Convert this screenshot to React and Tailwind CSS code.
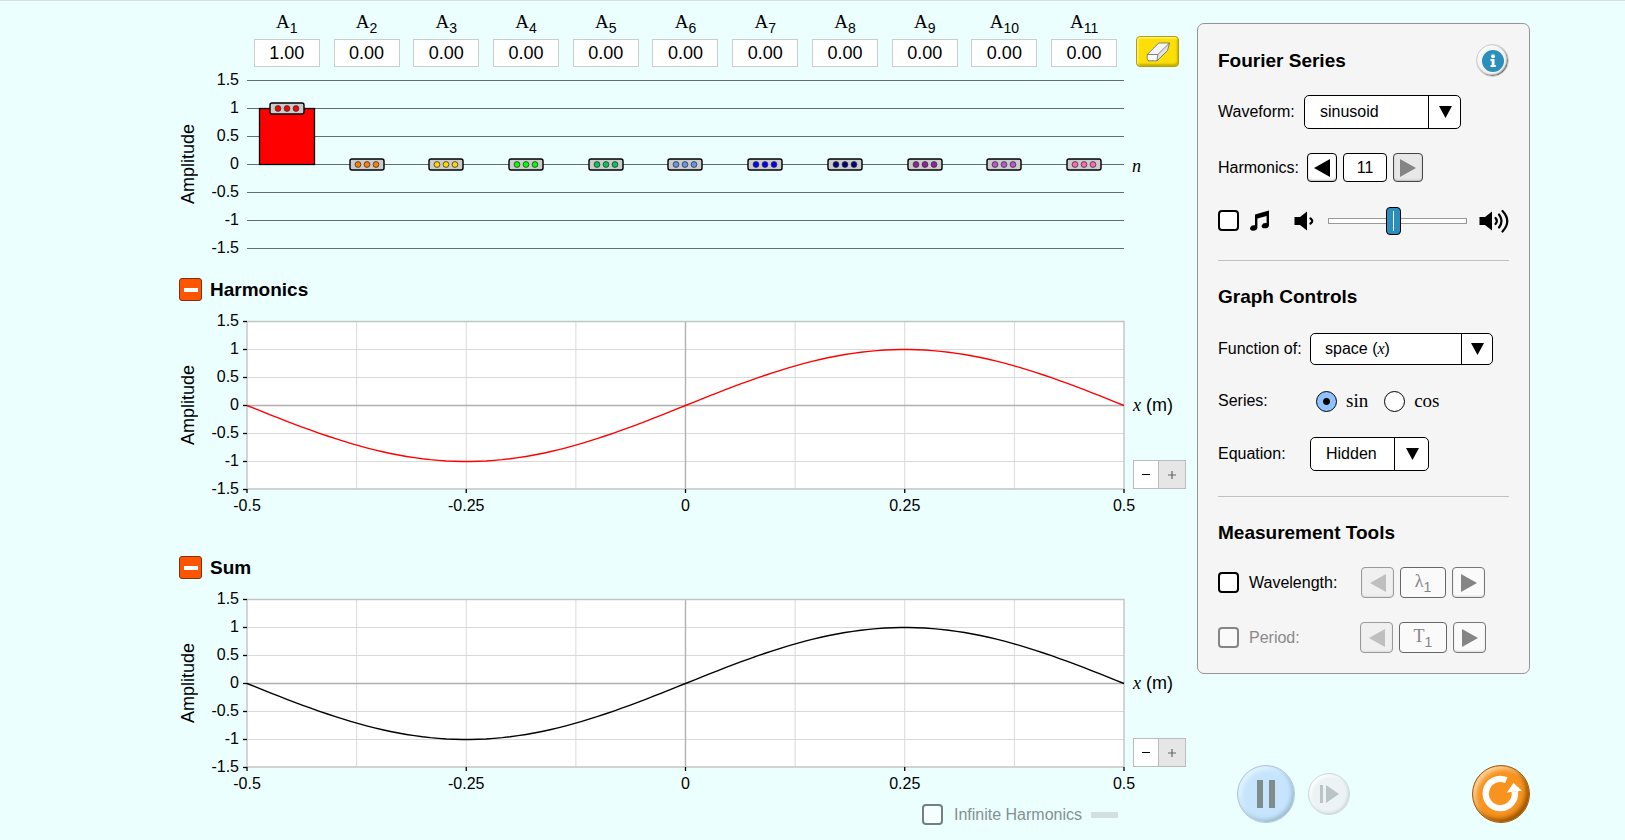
import { useState } from 'react'

const harmonics = [
  { n: 1, value: 1, color: '#ff0000' },
  { n: 2, value: 0, color: '#ff8000' },
  { n: 3, value: 0, color: '#ffd700' },
  { n: 4, value: 0, color: '#00ff00' },
  { n: 5, value: 0, color: '#00c957' },
  { n: 6, value: 0, color: '#6495ed' },
  { n: 7, value: 0, color: '#0000ff' },
  { n: 8, value: 0, color: '#000080' },
  { n: 9, value: 0, color: '#91219e' },
  { n: 10, value: 0, color: '#ba55d3' },
  { n: 11, value: 0, color: '#ff69b4' },
]

const yTicks = ['1.5', '1', '0.5', '0', '-0.5', '-1', '-1.5']
const xTicks = ['-0.5', '-0.25', '0', '0.25', '0.5']

// chart drawing units, one amplitude unit is 56 high
const W = 880
const H = 168
const UNIT = 56

const sinePoints = Array.from({ length: 111 }, (_, i) => {
  const x = i / 110 - 0.5
  return `${i * 8},${(H / 2 + 0.5 - UNIT * Math.sin(2 * Math.PI * x)).toFixed(2)}`
}).join(' ')

function YAxis() {
  return (
    <div className="flex h-[168px] items-center justify-between pr-2">
      <span className="rotate-180 text-lg leading-[18px] [writing-mode:vertical-rl]">Amplitude</span>
      <div className="flex h-full flex-col justify-between text-right text-base leading-5">
        {yTicks.map((tick) => (
          <span key={tick} className="-my-[10px]">{tick}</span>
        ))}
      </div>
    </div>
  )
}

function Handle({ value, color }) {
  const y = H / 2 + 0.5 - UNIT * value
  return (
    <svg className="mx-auto h-[168px] w-[56px] overflow-visible" viewBox="0 0 56 168">
      {value !== 0 && (
        <rect x="0.5" y={y} width="55" height={UNIT * value} fill={color} stroke="#000" strokeWidth="1.3" />
      )}
      <rect x="11" y={y - 5.5} width="34" height="11" rx="2" fill="#ccc" stroke="#000" strokeWidth="1.4" />
      {[19, 28, 37].map((x) => (
        <circle key={x} cx={x} cy={y} r="2.9" fill={color} stroke="#333" strokeWidth="0.8" />
      ))}
    </svg>
  )
}

function AmplitudeChart() {
  return (
    <section>
      <div className="grid grid-cols-[68px_1fr_64px] pt-2">
        <div className="col-start-2 grid grid-cols-11">
          {harmonics.map((h) => (
            <label key={h.n} className="flex flex-col items-center">
              <span className="h-[30px] font-['Liberation_Serif',serif] text-[19px] leading-[26px]">
                A<sub className="bottom-[-5px] font-['Liberation_Sans',sans-serif] text-sm leading-none">{h.n}</sub>
              </span>
              <input
                className="h-7 w-[66px] border border-[#ccc] bg-white text-center text-lg leading-6 outline-none"
                defaultValue={h.value.toFixed(2)}
              />
            </label>
          ))}
        </div>
        <div className="flex items-end pl-3">
          <button
            aria-label="Set all amplitudes to zero"
            className="flex h-[31px] w-[43px] items-center justify-center rounded-[4px] border border-[#b3a000] bg-[#fddf08] shadow-[inset_1px_1px_2px_#fff8b0,inset_-1px_-2px_2px_#c4ad00]"
          >
            <svg className="h-5 w-6" viewBox="0 0 24 20">
              <path d="M1 12.5 12.8 1 23.5 1 21.5 8.6 11 19 2 18.6Z" fill="#e4e4e4" />
              <path d="M1.3 12.5 12.8 1 23.5 1 11.8 12.5Z" fill="#f6f6f6" />
              <path d="M1.3 12.5H11.8L11 18.8 2.4 18.6Q0.8 17 1.3 12.5Z" fill="#fff" />
              <path d="M2 18.6Q0.6 17 1.3 12.5L12.8 1H23.5L21.5 8.6 11 18.8H2M1.3 12.5H11.8L23.5 1M11.8 12.5 11 18.8" fill="none" stroke="#555" strokeWidth="0.7" />
            </svg>
          </button>
        </div>
      </div>
      <div className="mt-[13px] grid grid-cols-[68px_1fr_64px]">
        <YAxis />
        <div className="relative">
          <svg className="block h-[168px] w-full overflow-visible" viewBox={`0 0 ${W} ${H}`} preserveAspectRatio="none">
            {yTicks.map((tick, i) => (
              <line key={tick} x1="0" x2={W} y1={i * 28 + 0.5} y2={i * 28 + 0.5} stroke="#646e6e" strokeWidth="1.2" vectorEffect="non-scaling-stroke" />
            ))}
          </svg>
          <div className="absolute inset-0 grid grid-cols-11">
            {harmonics.map((h) => (
              <Handle key={h.n} value={h.value} color={h.color} />
            ))}
          </div>
        </div>
        <span className="self-center pt-1 pl-2 font-['Liberation_Serif',serif] text-lg leading-5 italic">n</span>
      </div>
    </section>
  )
}

function WaveChart({ title, color }) {
  return (
    <section>
      <div className="flex items-center gap-2">
        <button
          aria-label={`Collapse ${title}`}
          className="flex size-[23px] items-center justify-center rounded-[3px] border border-[#803010] bg-[#ff5500]"
        >
          <span className="h-1 w-[14px] bg-white" />
        </button>
        <h2 className="text-[19px] leading-[23px] font-bold">{title}</h2>
      </div>
      <div className="mt-5 grid grid-cols-[68px_1fr_64px]">
        <YAxis />
        <svg className="block h-[168px] w-full overflow-visible" viewBox={`0 0 ${W} ${H}`} preserveAspectRatio="none">
          <rect width={W} height={H} fill="#fff" />
          <g fill="none" stroke="#d9d9d9">
            {[1, 2, 4, 5].map((i) => (
              <line key={i} x1="0" x2={W} y1={i * 28 + 0.5} y2={i * 28 + 0.5} vectorEffect="non-scaling-stroke" />
            ))}
            {[1, 2, 3, 5, 6, 7].map((i) => (
              <line key={i} x1={i * 110} x2={i * 110} y1="0" y2={H} vectorEffect="non-scaling-stroke" />
            ))}
          </g>
          <g fill="none" stroke="#b0b0b0" strokeWidth="1.4">
            <line x1="0" x2={W} y1="84.5" y2="84.5" vectorEffect="non-scaling-stroke" />
            <line x1="440" x2="440" y1="0" y2={H} vectorEffect="non-scaling-stroke" />
            <rect y="0.5" width={W} height={H - 0.5} stroke="#c4c4c4" vectorEffect="non-scaling-stroke" />
          </g>
          <g stroke="#000" strokeWidth="1.3">
            {yTicks.map((tick, i) => (
              <line key={tick} x1="-4" x2="0" y1={i * 28 + 0.5} y2={i * 28 + 0.5} vectorEffect="non-scaling-stroke" />
            ))}
            {xTicks.map((tick, i) => (
              <line key={tick} x1={i * 220} x2={i * 220} y1={H} y2={H + 4} vectorEffect="non-scaling-stroke" />
            ))}
          </g>
          <polyline points={sinePoints} fill="none" stroke={color} strokeWidth="1.4" vectorEffect="non-scaling-stroke" />
        </svg>
        <div className="grid grid-rows-[1fr_20px_1fr] pl-[9px] text-lg leading-5">
          <span className="row-start-2 whitespace-nowrap">
            <i className="font-['Liberation_Serif',serif]">x</i> (m)
          </span>
          <div className="row-start-3 flex self-end text-base leading-none">
            <button aria-label="Zoom out" className="flex h-[29px] w-[26px] items-center justify-center border border-[#bbb] bg-white">
              <span className="h-px w-2 bg-black" />
            </button>
            <button aria-label="Zoom in" disabled className="flex h-[29px] w-[27px] items-center justify-center border border-l-0 border-[#bbb] bg-[#e6e6e6]">
              <svg className="size-2" viewBox="0 0 8 8">
                <path d="M0 4H8M4 0V8" stroke="#666" strokeWidth="1.2" />
              </svg>
            </button>
          </div>
        </div>
      </div>
      <div className="mr-16 ml-[68px] flex h-[27px] items-end justify-between text-base leading-5">
        {xTicks.map((tick) => (
          <span key={tick} className="flex w-0 justify-center whitespace-nowrap">{tick}</span>
        ))}
      </div>
    </section>
  )
}

function ComboBox({ id, className, capClassName, options, children }) {
  return (
    <div className={`relative ${className}`}>
      <select
        id={id}
        className={`size-full appearance-none rounded-[5px] border border-black bg-white pl-[15px] text-base outline-none ${children ? 'text-transparent' : ''}`}
      >
        {options.map((option) => (
          <option key={option}>{option}</option>
        ))}
      </select>
      {children && (
        <span className="pointer-events-none absolute inset-y-0 left-[15px] flex items-center text-base whitespace-pre">{children}</span>
      )}
      <span className={`pointer-events-none absolute inset-y-0 right-0 flex items-center justify-center border-l border-black ${capClassName}`}>
        <svg className="h-3 w-[13px]" viewBox="0 0 13 12">
          <path d="M0 0H13L6.5 12Z" />
        </svg>
      </span>
    </div>
  )
}

function ArrowButton({ direction, className, arrow, label, disabled }) {
  return (
    <button
      aria-label={label}
      disabled={disabled}
      className={`flex items-center justify-center rounded-[4px] border ${className}`}
    >
      <svg className="h-[18px] w-4" viewBox="0 0 16 18" fill={arrow}>
        <path d={direction === 'left' ? 'M16 0V18L0 9Z' : 'M0 0V18L16 9Z'} />
      </svg>
    </button>
  )
}

function Speaker({ loud }) {
  return (
    <svg className={loud ? 'h-6 w-[30px]' : 'h-6 w-5'} viewBox={loud ? '0 0 30 24' : '0 0 20 24'}>
      <path d="M0.5 8H6L13 2.5V21.5L6 16H0.5Z" />
      <g fill="none" stroke="#000" strokeWidth="2.2" strokeLinecap="round">
        <path d={loud ? 'M16.5 9Q19.2 12 16.5 15' : 'M16.5 9.5Q20 12 16.5 14.5'} />
        {loud && <path d="M20 5.5Q25 12 20 18.5" />}
        {loud && <path d="M23.5 2Q33 12 23.5 22.5" />}
      </g>
    </svg>
  )
}

function ControlPanel() {
  const [series, setSeries] = useState('sin')
  const [volume, setVolume] = useState(47)

  return (
    <aside className="rounded-[7px] border border-[#949494] bg-[#f5f5f5] px-5 py-5 text-base leading-5">
      <div className="flex h-[33px] items-center justify-between">
        <h2 className="text-[19px] font-bold">Fourier Series</h2>
        <button
          aria-label="Information"
          className="flex size-[33px] items-center justify-center rounded-full border border-[#ccc] bg-[#f7f7f7] shadow-[inset_-1px_-1px_2px_#555,inset_1px_1px_2px_#fff]"
        >
          <svg className="size-[22px]" viewBox="0 0 22 22">
            <circle cx="11" cy="11" r="11" fill="#2b8fbb" />
            <g fill="#fff">
              <circle cx="11" cy="6.3" r="2" />
              <path d="M8.5 9H12.5V15H13.8V17H8.5V15H9.7V11H8.5Z" />
            </g>
          </svg>
        </button>
      </div>

      <div className="mt-[18px] flex items-center">
        <label htmlFor="waveform" className="w-[86px]">Waveform:</label>
        <ComboBox id="waveform" className="h-[34px] w-[157px]" capClassName="w-[33px]" options={['sinusoid', 'triangle', 'square', 'sawtooth', 'wave packet', 'custom']} />
      </div>

      <div className="mt-6 flex items-center">
        <label htmlFor="harmonics" className="w-[89px]">Harmonics:</label>
        <ArrowButton direction="left" label="Fewer harmonics" arrow="#000" className="h-[29px] w-[30px] border-black bg-white shadow-[inset_0_-1px_2px_#bbb]" />
        <input id="harmonics" readOnly value="11" className="mx-[6px] h-[29px] w-[44px] rounded-[4px] border border-black bg-white text-center outline-none" />
        <ArrowButton direction="right" label="More harmonics" disabled arrow="#858585" className="h-[29px] w-[30px] border-[#444] bg-[#e8e8e8] shadow-[inset_0_-1px_2px_#bbb]" />
      </div>

      <div className="mt-6 flex h-[29px] items-center justify-between">
        <label className="flex items-center gap-[10px]">
          <input type="checkbox" aria-label="Sound" className="size-[21px] appearance-none rounded-[4px] border-2 border-black bg-white" />
          <svg className="size-[21px]" viewBox="0 0 21 21">
            <path d="M6 4.5 20 0.5V15.5A3.8 2.6 -15 1 1 17.6 13V6L8.4 8.6V17.8A3.8 2.6 -15 1 1 6 15.3Z" />
          </svg>
        </label>
        <div className="flex items-center">
          <Speaker />
          <input
            type="range"
            aria-label="Volume"
            value={volume}
            onChange={(event) => setVolume(event.target.value)}
            className="mr-3 ml-[14px] h-7 w-[139px] appearance-none bg-transparent [&::-webkit-slider-runnable-track]:h-[6px] [&::-webkit-slider-runnable-track]:border [&::-webkit-slider-runnable-track]:border-[#999] [&::-webkit-slider-runnable-track]:bg-white [&::-webkit-slider-thumb]:-mt-3 [&::-webkit-slider-thumb]:h-7 [&::-webkit-slider-thumb]:w-[15px] [&::-webkit-slider-thumb]:appearance-none [&::-webkit-slider-thumb]:rounded-[4px] [&::-webkit-slider-thumb]:border [&::-webkit-slider-thumb]:border-black [&::-webkit-slider-thumb]:bg-[linear-gradient(#fff,#fff)] [&::-webkit-slider-thumb]:bg-[length:1px_20px] [&::-webkit-slider-thumb]:bg-center [&::-webkit-slider-thumb]:bg-no-repeat [&::-webkit-slider-thumb]:bg-[#2b8fbb]"
          />
          <Speaker loud />
        </div>
      </div>

      <hr className="mt-[25px] border-[#c0c0c0]" />

      <h2 className="mt-[22px] text-[19px] leading-7 font-bold">Graph Controls</h2>
      <div className="mt-[22px] flex items-center">
        <label htmlFor="function-of" className="w-[92px]">Function of:</label>
        <ComboBox id="function-of" className="h-8 w-[183px]" capClassName="w-8" options={['space (x)', 'time (t)', 'space & time (x, t)']}>
          space (<i className="font-['Liberation_Serif',serif]">x</i>)
        </ComboBox>
      </div>

      <div role="radiogroup" aria-label="Series" className="mt-[22px] flex h-7 items-center">
        <span className="w-[98px]">Series:</span>
        {['sin', 'cos'].map((name) => (
          <label key={name} className="mr-4 flex items-center gap-[9px] font-['Liberation_Serif',serif] text-[19px]">
            <input
              type="radio"
              name="series"
              checked={series === name}
              onChange={() => setSeries(name)}
              className="size-[21px] appearance-none rounded-full border border-black bg-white checked:bg-[radial-gradient(circle,#000_3px,#8dc3ff_4px)]"
            />
            {name}
          </label>
        ))}
      </div>

      <div className="mt-[22px] flex items-center">
        <label htmlFor="equation" className="w-[92px]">Equation:</label>
        <ComboBox id="equation" className="h-[34px] w-[119px]" capClassName="w-[35px]" options={['Hidden', 'Wavelength', 'Mode']} />
      </div>

      <hr className="mt-[25px] border-[#c0c0c0]" />

      <h2 className="mt-[22px] text-[19px] leading-7 font-bold">Measurement Tools</h2>
      <div className="mt-5 flex items-center justify-between pr-6">
        <label className="flex items-center gap-[10px]">
          <input type="checkbox" className="size-[21px] appearance-none rounded-[4px] border-2 border-black bg-white" />
          Wavelength:
        </label>
        <div className="flex gap-[6px]">
          <ArrowButton direction="left" label="Previous wavelength" disabled arrow="#bfbfbf" className="h-[31px] w-[33px] border-[#999] bg-[#f0f0f0] shadow-[inset_0_-1px_2px_#ddd]" />
          <span className="h-[31px] w-[46px] rounded-[4px] border border-[#666] bg-[#fafafa] text-center font-['Liberation_Serif',serif] text-lg leading-[26px] text-[#858585]">
            λ<sub className="bottom-[-5px] font-['Liberation_Sans',sans-serif] text-sm leading-none">1</sub>
          </span>
          <ArrowButton direction="right" label="Next wavelength" arrow="#858585" className="h-[31px] w-[33px] border-[#777] bg-[#fafafa] shadow-[inset_0_-1px_2px_#ddd]" />
        </div>
      </div>
      <div className="mt-6 flex items-center justify-between pr-[23px] text-[#8a8a8a]">
        <label className="flex items-center gap-[10px]">
          <input type="checkbox" disabled className="size-[21px] appearance-none rounded-[4px] border-2 border-[#858585] bg-[#fafafa]" />
          Period:
        </label>
        <div className="flex gap-[6px]">
          <ArrowButton direction="left" label="Previous period" disabled arrow="#bfbfbf" className="h-[31px] w-[33px] border-[#999] bg-[#f0f0f0] shadow-[inset_0_-1px_2px_#ddd]" />
          <span className="h-[31px] w-[48px] rounded-[4px] border border-[#666] bg-[#fafafa] text-center font-['Liberation_Serif',serif] text-lg leading-[26px] text-[#858585]">
            T<sub className="bottom-[-5px] font-['Liberation_Sans',sans-serif] text-sm leading-none">1</sub>
          </span>
          <ArrowButton direction="right" label="Next period" arrow="#858585" className="h-[31px] w-[33px] border-[#777] bg-[#fafafa] shadow-[inset_0_-1px_2px_#ddd]" />
        </div>
      </div>
    </aside>
  )
}

function TimeControls() {
  return (
    <div className="flex items-center pl-10">
      <button
        aria-label="Pause"
        disabled
        className="flex size-[58px] items-center justify-center gap-[6px] rounded-full border border-[#b0cbd9] bg-[#c6e5fd] shadow-[inset_-2px_-2px_4px_#9ab8cf,inset_3px_3px_4px_#e4f4ff]"
      >
        <span className="h-7 w-[6px] bg-[#7f8c8c]" />
        <span className="h-7 w-[6px] bg-[#7f8c8c]" />
      </button>
      <button
        aria-label="Step"
        disabled
        className="ml-[13px] flex size-[42px] items-center justify-center rounded-full border border-[#cfdada] bg-[#edf3f5] shadow-[inset_-1px_-1px_3px_#ccd5d8,inset_2px_2px_3px_#fff]"
      >
        <svg className="h-[18px] w-[19px]" viewBox="0 0 19 18" fill="#b9c4c6">
          <path d="M0 0H3V18H0ZM6 0 19 9 6 18Z" />
        </svg>
      </button>
      <button
        aria-label="Reset all"
        className="ml-auto flex size-[58px] items-center justify-center rounded-full border border-[#a0600f] bg-[#f7931e] shadow-[inset_-3px_-3px_4px_#9c5500,inset_3px_3px_4px_#fcd3a0]"
      >
        <svg className="size-10 overflow-visible" viewBox="0 0 40 40">
          <path d="M25.3 6.2A14.6 14.6 0 1 0 33.8 17.5" fill="none" stroke="#fff" strokeWidth="6.4" />
          <path d="M25.8 18.5 32.5 9 41 16.7Z" fill="#fff" />
        </svg>
      </button>
    </div>
  )
}

function App() {
  return (
    <main className="flex min-h-screen gap-[9px] border-t border-[#ddd] bg-[#ebffff] pr-[95px] pb-4 pl-[179px] font-['Liberation_Sans',sans-serif] text-black">
      <div className="min-w-0 flex-1">
        <AmplitudeChart />
        <div className="mt-[30px]">
          <WaveChart title="Harmonics" color="#ff0000" />
        </div>
        <div className="mt-10">
          <WaveChart title="Sum" color="#000000" />
        </div>
        <label className="mt-[10px] mr-[70px] flex items-center justify-end text-base leading-5 text-[#849191]">
          <input type="checkbox" disabled className="mr-[11px] size-[21px] appearance-none rounded-[4px] border-2 border-[#748080] bg-[#f6ffff]" />
          Infinite Harmonics
          <span className="ml-[9px] h-[6px] w-[27px] bg-[#d3e0e0]" />
        </label>
      </div>
      <div className="flex w-[333px] shrink-0 flex-col justify-between pt-[22px] pb-0.5">
        <ControlPanel />
        <TimeControls />
      </div>
    </main>
  )
}

export default App
